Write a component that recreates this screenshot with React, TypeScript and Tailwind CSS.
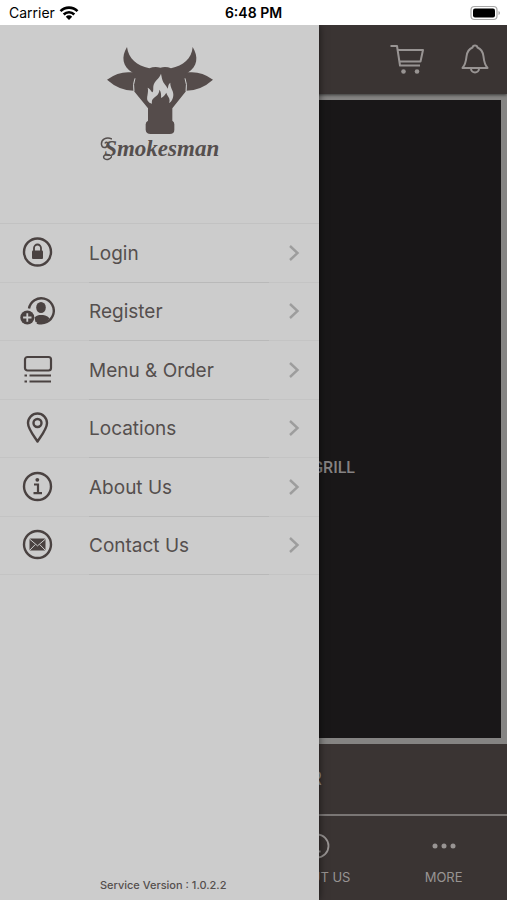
import type { ReactNode } from 'react';

const LockIcon = () => (
  <svg className="w-9 h-9" viewBox="0 0 36 36" fill="none" stroke="currentColor">
    <circle cx="18.5" cy="17" r="13.5" strokeWidth="2.4" />
    <path d="M15 17v-4a3.5 3.5 0 0 1 7 0V17" strokeWidth="1.8" />
    <rect x="13" y="15.500" width="11" height="8.500" rx="1" fill="currentColor" stroke="none" />
  </svg>
);

const RegisterIcon = () => (
  <svg className="w-9 h-9" viewBox="0 0 36 36" fill="none" stroke="currentColor">
    <path d="M10 15.500a12.500 12.500 0 1 1 8 14" strokeWidth="2.4" />
    <ellipse cx="22" cy="14.500" rx="4.800" ry="5.500" fill="currentColor" stroke="none" />
    <path d="M15.500 24.500c2-2.200 4-2.500 6.500-2.500s6 .5 8.500 3.200c-2.500 3.300-5.500 4.800-9 4.800-1.800 0-3.500-.3-5-1z" fill="currentColor" stroke="none" />
    <circle cx="8.300" cy="24.500" r="7" fill="currentColor" stroke="none" />
    <path d="M8.300 20.300v8.400M4.100 24.500h8.400" stroke="#cccccc" strokeWidth="1.800" />
  </svg>
);

const MenuIcon = () => (
  <svg className="w-9 h-9" viewBox="0 0 36 36" fill="none" stroke="currentColor" strokeWidth="2.2">
    <rect x="6" y="5" width="26" height="13.500" rx="2.500" />
    <path d="M10.500 23.500H32M10.500 29.500H32M5.500 23.500h2.500M5.500 29.500h2.500" />
  </svg>
);

const PinIcon = () => (
  <svg className="w-9 h-9" viewBox="0 0 36 36" fill="none" stroke="currentColor" strokeWidth="2.4" strokeLinejoin="round">
    <path d="M18.500 31.500C15 26 9 19 9 13a9.500 9.500 0 0 1 19 0c0 6-6 13-9.500 18.500z" />
    <circle cx="18.500" cy="13" r="4" />
  </svg>
);

const InfoIcon = () => (
  <svg className="w-9 h-9" viewBox="0 0 36 36" fill="none" stroke="currentColor">
    <circle cx="18.500" cy="17.500" r="13.500" strokeWidth="2.4" />
    <circle cx="18.300" cy="10.800" r="1.900" fill="currentColor" stroke="none" />
    <path d="M15 15.500h4V24M14.500 24.200h8.500" strokeWidth="2.2" />
  </svg>
);

const MailIcon = () => (
  <svg className="w-9 h-9" viewBox="0 0 36 36" fill="none" stroke="currentColor">
    <circle cx="18.500" cy="17.500" r="13.500" strokeWidth="2.4" />
    <rect x="10.500" y="11.500" width="16" height="12" rx="1" fill="currentColor" stroke="none" />
    <path d="M10.500 12l8 6.800 8-6.800M10.500 23.500l5.800-6M26.500 23.500l-5.800-6" stroke="#cccccc" strokeWidth="1" />
  </svg>
);

const BullLogo = () => (
  <svg className="w-[140px] h-[100px]" viewBox="0 0 420 300" fill="#554c4b" aria-hidden="true">
    <path d="M111 36C93 66 97 94 128 113L131 167L174 220V257Q167 260 167 268V284Q168 297 182 297H239Q253 297 253 284V268Q253 260 247 257V220L289 167L293 113C323 94 326 66 308 36C305 72 280 91 243 100Q228 93 211 98Q194 93 178 100C140 91 116 72 111 36Z" />
    <path d="M51 134Q84 111 117 112L134 112Q126 145 131 167Q88 167 51 134Z" />
    <path d="M369 134Q336 111 303 112L286 112Q294 145 289 167Q332 167 369 134Z" />
    <path d="M135 130Q128 148 132 169M285 130Q292 148 288 169" fill="none" stroke="#cccccc" strokeWidth="3" />
    <path
      d="M213 116C208 131 191 139 190 154C189 161 191 166 188 172C182 169 182 162 173 158C177 172 168 188 173 197Q177 204 186 206C184 194 190 190 198 184C205 178 208 172 208 164C213 169 214 178 213 189C221 184 225 180 229 173C230 180 236 184 238 191Q240 197 237 204C244 201 250 190 250 179C250 165 240 158 241 143C234 147 235 155 233 161C229 152 224 149 220 142C216 134 215 125 213 116Z"
      fill="#cccccc"
    />
  </svg>
);

const menuItems: { label: string; icon: ReactNode }[] = [
  { label: 'Login', icon: <LockIcon /> },
  { label: 'Register', icon: <RegisterIcon /> },
  { label: 'Menu & Order', icon: <MenuIcon /> },
  { label: 'Locations', icon: <PinIcon /> },
  { label: 'About Us', icon: <InfoIcon /> },
  { label: 'Contact Us', icon: <MailIcon /> },
];

const StatusBar = () => (
  <div className="grid grid-cols-3 items-center h-[25px] shrink-0 bg-white text-black text-sm">
    <div className="flex items-center gap-1 pl-[9px]">
      <span>Carrier</span>
      <svg className="w-5 h-4" viewBox="0 0 20 16" fill="none" stroke="black" strokeWidth="2.600">
        <path d="M1.500 6.200a12 12 0 0 1 17 0M4.700 9.500a7.500 7.500 0 0 1 10.600 0" />
        <path d="M10 15l-3.200-3.300a4.500 4.500 0 0 1 6.400 0z" fill="black" stroke="none" />
      </svg>
    </div>
    <span className="text-center font-semibold">6:48 PM</span>
    <svg className="w-8 h-4 justify-self-end mr-[6px]" viewBox="0 0 32 16" fill="none">
      <rect x="2" y="1.500" width="26" height="13" rx="3.500" stroke="#a8a8a8" strokeWidth="1.200" />
      <rect x="4" y="3.500" width="22" height="9" rx="2" fill="black" />
      <path d="M29.500 6v4q1.500-.5 1.500-2t-1.500-2z" fill="#a8a8a8" />
    </svg>
  </div>
);

const Drawer = () => (
  <aside className="absolute inset-y-0 left-0 w-[63%] flex flex-col bg-[#cccccc] text-[#554f4e] shadow-[0_0_8px_rgba(0,0,0,0.6)]">
    <div className="flex flex-col items-center h-[198px] shrink-0 pt-[10px]">
      <BullLogo />
      <div className="flex items-center">
        <svg className="w-3 h-7 -mr-2" viewBox="0 0 12 28" fill="none" stroke="currentColor" strokeWidth="1.500">
          <path d="M12 4C6 1 1 5 1.500 9.500c.5 4 5 4 6 .5s-2-3.500-2.500-1.500M10 20c-6-1.500-8 2-5 4 2 1.300 5 .5 7-3" />
        </svg>
        <span className="font-['Liberation_Serif',serif] italic font-bold text-[23px] leading-7">Smokesman</span>
      </div>
    </div>
    <nav className="grid auto-rows-fr h-[352px] shrink-0 border-t border-[#c2c2c2]">
      {menuItems.map((item) => (
        <a key={item.label} href="#" className="relative flex items-center border-b border-[#c4c4c4]">
          <span className="w-[89px] pl-[19px] text-[#4a4241]">{item.icon}</span>
          <span className="flex-1 pt-0.5 text-[19px]">{item.label}</span>
          <svg className="w-3 h-5 mr-[19px]" viewBox="0 0 12 20" fill="none" stroke="#9d9d9d" strokeWidth="2.400">
            <path d="M2 3l7.500 7L2 17" />
          </svg>
          <span className="absolute -bottom-px left-[89px] right-[50px] h-px bg-[#b9b9b9]" />
        </a>
      ))}
    </nav>
    <p className="mt-auto pb-[7px] pl-[7px] text-center text-[11px] leading-4 font-medium">Service Version : 1.0.2.2</p>
  </aside>
);

const App = () => {
  return (
    <div className="flex flex-col min-h-screen bg-white font-[Inter,'Liberation_Sans',sans-serif]">
      <StatusBar />
      <div className="relative flex flex-col flex-1 overflow-hidden bg-[#858483]">
        <header className="flex items-center justify-end gap-8 h-[69px] shrink-0 pr-[14px] bg-[#3a3433] text-[#989493] shadow-[0_1px_3px_rgba(0,0,0,0.6)]">
          <button aria-label="Cart">
            <svg className="w-9 h-9" viewBox="0 0 36 36" fill="none" stroke="currentColor" strokeWidth="2" strokeLinejoin="round">
              <path d="M1.500 4h6.500l3 19.500h20M8.600 8H34l-2.500 11.500H10.500" />
              <circle cx="14.500" cy="29.500" r="2.300" fill="currentColor" stroke="none" />
              <circle cx="28" cy="29.500" r="2.300" fill="currentColor" stroke="none" />
            </svg>
          </button>
          <button aria-label="Notifications">
            <svg className="w-9 h-9" viewBox="0 0 36 36" fill="none" stroke="currentColor" strokeWidth="2" strokeLinejoin="round">
              <path d="M18 3.500c-1.500 0-2.300 1-2.500 2-4 1.500-5.500 5-6 9-.5 5-1 8-4 11.500h25c-3-3.500-3.500-6.500-4-11.500-.5-4-2-7.500-6-9-.2-1-1-2-2.500-2z" />
              <path d="M14 26.500a4 4 0 0 0 8 0" />
            </svg>
          </button>
        </header>
        <main className="flex flex-1 pt-[6px] pb-[6px] pr-[6px]">
          <div className="flex flex-1 items-center justify-end pr-[146px] pt-[98px] bg-[#191718]">
            <p className="font-[Roboto,sans-serif] font-medium text-base text-[#858283]">GRILL</p>
          </div>
        </main>
        <button className="h-[70px] shrink-0 bg-[#3a3433] text-[#989493] text-lg">MENU &amp; ORDER</button>
        <footer className="grid grid-cols-4 h-[86px] shrink-0 border-t-2 border-[#7a7675] bg-[#3a3433] text-[#989493] text-[13px]">
          <a href="#" className="col-start-3 flex flex-col items-center pt-4">
            <svg className="w-7 h-7" viewBox="0 0 28 28" fill="none" stroke="currentColor" strokeWidth="1.800">
              <circle cx="14" cy="14" r="11.500" />
              <circle cx="14" cy="8.500" r="1.300" fill="currentColor" stroke="none" />
              <path d="M11.500 12.500H14V19M11 19.500h6.500" />
            </svg>
            <span className="mt-2">ABOUT US</span>
          </a>
          <a href="#" className="flex flex-col items-center pt-4">
            <svg className="w-7 h-7" viewBox="0 0 28 28" fill="currentColor">
              <circle cx="5" cy="14" r="2.500" />
              <circle cx="14" cy="14" r="2.500" />
              <circle cx="23" cy="14" r="2.500" />
            </svg>
            <span className="mt-2">MORE</span>
          </a>
        </footer>
        <Drawer />
      </div>
    </div>
  );
};

export default App;
